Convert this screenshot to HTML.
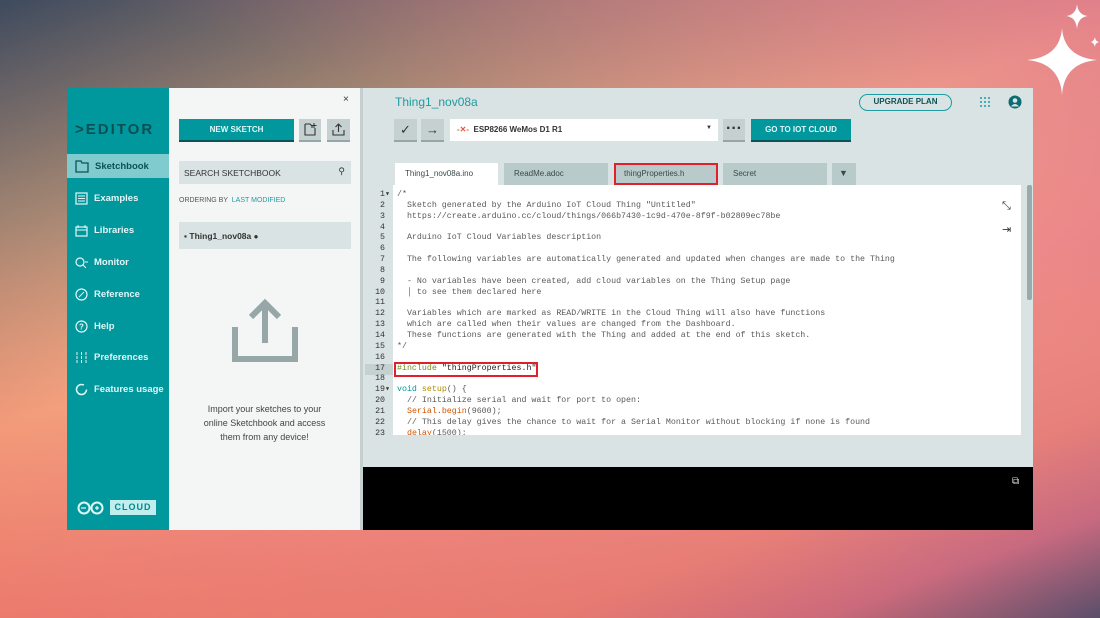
<!DOCTYPE html>
<html><head><meta charset="utf-8"><style>
*{margin:0;padding:0;box-sizing:border-box}
body{width:1100px;height:618px;overflow:hidden;position:relative;font-family:"Liberation Sans",sans-serif;
background:linear-gradient(160deg,#3e4a5e 0%,#9a8070 20%,#f7b088 42%,#f08e88 62%,#e7807a 80%,#c86a80 90%,#5a4e6a 100%);}
.bg2{position:absolute;inset:0;background:linear-gradient(200deg,rgba(220,110,140,.7) 0%,rgba(220,110,140,0) 35%),linear-gradient(20deg,rgba(232,108,90,.6) 0%,rgba(232,108,90,0) 40%)}
.abs{position:absolute}
.side{left:67px;top:88px;width:102px;height:442px;background:#00979d}
.nav{position:absolute;left:0;width:102px;height:24px;color:#e3f6f6;font-size:9.5px;font-weight:bold;display:flex;align-items:center;padding-left:8px}
.nav svg{margin-right:6px}
.panel{left:169px;top:88px;width:191px;height:442px;background:#f4f6f6}
.main{left:363px;top:88px;width:670px;height:379px;background:#dae3e3}
.div{left:360px;top:88px;width:3px;height:442px;background:#c5cfcf}
.code{font-family:"Liberation Mono",monospace;font-size:8.3px;color:#5a5a5a;white-space:pre;line-height:10.85px}
.tab{position:absolute;top:163px;height:22px;background:#b9caca;font-size:8px;color:#3a4a4a;padding:6px 10px}
</style></head><body>
<div class="bg2"></div>
<svg class="abs" style="left:1020px;top:0" width="80" height="100" viewBox="1020 0 80 100">
<path d="M1062 28 Q1064 57 1097 60 Q1064 63 1062 95 Q1060 63 1027 60 Q1060 57 1062 28Z" fill="#fff"/>
<path d="M1077 4 Q1078 15 1088 16 Q1078 17 1077 29 Q1076 17 1066 16 Q1076 15 1077 4Z" fill="#fff"/>
<path d="M1095 37 Q1095 41 1099 42 Q1095 43 1095 47 Q1094 43 1091 42 Q1094 41 1095 37Z" fill="#fff"/></svg>

<div class="abs side">
 <div class="abs" style="left:8px;top:33px;color:#0a4f54;font-size:15px;font-weight:bold;letter-spacing:2px">&gt;EDITOR</div>
 <div class="nav" style="top:66px;background:#7fcbce;color:#0b5358">
  <svg width="14" height="13" viewBox="0 0 14 13"><path d="M1 1h5l1 2h6v9H1z" fill="none" stroke="#0b5358" stroke-width="1.3"/></svg>Sketchbook</div>
 <div style="position:absolute;left:98px;top:74px;width:0;height:0;border:4px solid transparent;border-right-color:#f4f6f6"></div>
 <div class="nav" style="top:98px"><svg width="13" height="13"><rect x="1" y="1" width="11" height="11" fill="none" stroke="#e3f6f6" stroke-width="1.2"/><path d="M3 4h7M3 6.5h7M3 9h7" stroke="#e3f6f6"/></svg>Examples</div>
 <div class="nav" style="top:130px"><svg width="13" height="13"><rect x="1" y="3" width="11" height="9" fill="none" stroke="#e3f6f6" stroke-width="1.2"/><path d="M3 1v3M10 1v3M1 6h11" stroke="#e3f6f6"/></svg>Libraries</div>
 <div class="nav" style="top:162px"><svg width="13" height="13"><circle cx="5" cy="6" r="4" fill="none" stroke="#e3f6f6" stroke-width="1.2"/><path d="M8 9l3 3M10 6h3" stroke="#e3f6f6"/></svg>Monitor</div>
 <div class="nav" style="top:194px"><svg width="13" height="13"><circle cx="6.5" cy="6.5" r="5.5" fill="none" stroke="#e3f6f6" stroke-width="1.2"/><path d="M4 9l5-5" stroke="#e3f6f6"/></svg>Reference</div>
 <div class="nav" style="top:226px"><svg width="13" height="13"><circle cx="6.5" cy="6.5" r="5.5" fill="none" stroke="#e3f6f6" stroke-width="1.2"/><text x="4" y="9.5" font-size="8" fill="#e3f6f6">?</text></svg>Help</div>
 <div class="nav" style="top:257px"><svg width="13" height="13"><path d="M2 1v11M6.5 1v11M11 1v11" stroke="#e3f6f6" stroke-dasharray="3 1"/></svg>Preferences</div>
 <div class="nav" style="top:289px"><svg width="13" height="13"><circle cx="6.5" cy="6.5" r="5" fill="none" stroke="#e3f6f6" stroke-width="1.5" stroke-dasharray="26 6"/></svg>Features usage</div>
 <svg class="abs" style="left:9px;top:413px" width="30" height="14"><circle cx="8" cy="7" r="5.5" fill="none" stroke="#e3f6f6" stroke-width="2"/><circle cx="21" cy="7" r="5.5" fill="none" stroke="#e3f6f6" stroke-width="2"/><path d="M5 7h5M19 7h4M21 5v4" stroke="#e3f6f6" stroke-width="1.3"/></svg>
 <div class="abs" style="left:43px;top:412px;width:46px;height:15px;background:#c0eeee;color:#00878c;font-size:9px;font-weight:bold;letter-spacing:1px;text-align:center;line-height:15px">CLOUD</div>
</div>

<div class="abs panel">
 <div class="abs" style="left:174px;top:6px;font-size:10px;color:#333">×</div>
 <div class="abs" style="left:10px;top:31px;width:115px;height:23px;background:#00979d;border-bottom:2px solid #0b5358;color:#e3f6f6;font-size:8px;font-weight:bold;text-align:center;line-height:21px">NEW SKETCH</div>
 <div class="abs" style="left:130px;top:31px;width:22px;height:23px;background:#c5d0d0;border-bottom:2px solid #98a5a5"><svg width="22" height="21"><path d="M6 5h5l2 2v2M6 5v11h10V9" fill="none" stroke="#333" stroke-width="1.1"/><path d="M15 4v5M12.5 6.5h5" stroke="#333"/></svg></div>
 <div class="abs" style="left:158px;top:31px;width:23px;height:23px;background:#c5d0d0;border-bottom:2px solid #98a5a5"><svg width="23" height="21"><path d="M6 11v5h11v-5M11.5 13V5M8.5 8l3-3 3 3" fill="none" stroke="#333" stroke-width="1.1"/></svg></div>
 <div class="abs" style="left:10px;top:73px;width:172px;height:23px;background:#dae3e3;font-size:8.5px;color:#333;padding:7px 5px">SEARCH SKETCHBOOK<span style="position:absolute;right:6px;top:5px;font-size:9px">⚲</span></div>
 <div class="abs" style="left:10px;top:109px;font-size:7px;color:#555">ORDERING BY &nbsp;<span style="color:#1e9ca1">LAST MODIFIED</span></div>
 <div class="abs" style="left:10px;top:134px;width:172px;height:27px;background:#dae3e3;font-size:8.5px;color:#333;font-weight:bold;padding:9px 5px">▪ Thing1_nov08a <span style="font-size:8px">●</span></div>
 <svg class="abs" style="left:62px;top:209px" width="68" height="68"><path d="M4 30v32h60V30M34 46V6M20 20L34 6l14 14" fill="none" stroke="#97a6a6" stroke-width="6"/></svg>
 <div class="abs" style="left:0;top:314px;width:191px;text-align:center;font-size:9px;color:#444;line-height:14px">Import your sketches to your<br>online Sketchbook and access<br>them from any device!</div>
</div>
<div class="abs div"></div>

<div class="abs main">
 <div class="abs" style="left:32px;top:7px;color:#1e9ca1;font-size:12px">Thing1_nov08a</div>
 <div class="abs" style="left:496px;top:6px;width:93px;height:17px;border:1.5px solid #1e9ca1;border-radius:9px;font-size:8px;font-weight:bold;color:#0b5358;text-align:center;line-height:14px">UPGRADE PLAN</div>
 <svg class="abs" style="left:616px;top:8px" width="12" height="12"><g fill="#1e9ca1"><circle cx="2" cy="2" r="1"/><circle cx="6" cy="2" r="1"/><circle cx="10" cy="2" r="1"/><circle cx="2" cy="6" r="1"/><circle cx="6" cy="6" r="1"/><circle cx="10" cy="6" r="1"/><circle cx="2" cy="10" r="1"/><circle cx="6" cy="10" r="1"/><circle cx="10" cy="10" r="1"/></g></svg>
 <svg class="abs" style="left:645px;top:7px" width="14" height="14"><circle cx="7" cy="7" r="6.5" fill="#0b6d72"/><circle cx="7" cy="5.5" r="2.3" fill="#dae3e3"/><path d="M3 11.5q4-5 8 0" fill="#dae3e3"/></svg>
 <div class="abs" style="left:31px;top:31px;width:23px;height:23px;background:#c5d0d0;border-bottom:2px solid #98a5a5;text-align:center;font-size:13px;color:#333;line-height:21px">✓</div>
 <div class="abs" style="left:58px;top:31px;width:23px;height:23px;background:#c5d0d0;border-bottom:2px solid #98a5a5;text-align:center;font-size:13px;color:#333;line-height:21px">→</div>
 <div class="abs" style="left:87px;top:31px;width:268px;height:22px;background:#fff;font-size:8px;font-weight:bold;color:#333;padding:6px 7px"><span style="color:#e05a3a">-✕-</span>&nbsp; ESP8266 WeMos D1 R1<span style="position:absolute;right:6px;font-size:6px">▼</span></div>
 <div class="abs" style="left:360px;top:31px;width:22px;height:23px;background:#c5d0d0;border-bottom:2px solid #98a5a5;text-align:center;font-weight:bold;color:#333;line-height:19px">···</div>
 <div class="abs" style="left:388px;top:31px;width:100px;height:23px;background:#00979d;border-bottom:2px solid #0b5358;color:#e3f6f6;font-size:8px;font-weight:bold;text-align:center;line-height:21px">GO TO IOT CLOUD</div>
</div>
<div class="tab" style="left:395px;width:103px;background:#fff">Thing1_nov08a.ino</div>
<div class="tab" style="left:504px;width:104px">ReadMe.adoc</div>
<div class="tab" style="left:614px;width:104px;outline:2px solid #e0202a;outline-offset:-2px">thingProperties.h</div>
<div class="tab" style="left:723px;width:104px">Secret</div>
<div class="tab" style="left:832px;width:24px;font-size:9px;padding:5px 7px">▼</div>
<div class="abs" style="left:393px;top:185px;width:628px;height:250px;background:#fff"></div>
<div class="abs" style="left:1027px;top:185px;width:5px;height:115px;background:#9aa;border-radius:2px"></div>
<div class="abs" style="left:365px;top:364px;width:28px;height:11px;background:#c5d0d0"></div>
<div class="abs" style="left:1002px;top:200px;font-size:11px;color:#333">⤡</div>
<div class="abs" style="left:1002px;top:223px;font-size:11px;color:#333">⇥</div>
<div class="abs code" style="left:366px;top:190px;height:245px;overflow:hidden;text-align:right;width:24px;color:#333">1▾
2 
3 
4 
5 
6 
7 
8 
9 
10 
11 
12 
13 
14 
15 
16 
17 
18 
19▾
20 
21 
22 
23 </div>
<div class="abs code" style="left:397px;top:190px;height:245px;overflow:hidden">/*
  Sketch generated by the Arduino IoT Cloud Thing "Untitled"
  https://create.arduino.cc/cloud/things/066b7430-1c9d-470e-8f9f-b02809ec78be

  Arduino IoT Cloud Variables description

  The following variables are automatically generated and updated when changes are made to the Thing

  - No variables have been created, add cloud variables on the Thing Setup page
  │ to see them declared here

  Variables which are marked as READ/WRITE in the Cloud Thing will also have functions
  which are called when their values are changed from the Dashboard.
  These functions are generated with the Thing and added at the end of this sketch.
*/

<span style="color:#6f8f20">#include</span> <span style="color:#222">"thingProperties.h"</span>

<span style="color:#00979d">void</span> <span style="color:#b08800">setup</span>() {
  // Initialize serial and wait for port to open:
  <span style="color:#d35400">Serial</span>.<span style="color:#d35400">begin</span>(9600);
  // This delay gives the chance to wait for a Serial Monitor without blocking if none is found
  <span style="color:#d35400">delay</span>(1500);</div>
<div class="abs" style="left:394px;top:362px;width:144px;height:15px;border:2px solid #e0202a"></div>
<div class="abs" style="left:363px;top:467px;width:670px;height:63px;background:#000"></div>
<div class="abs" style="left:1012px;top:476px;font-size:10px;color:#ddd">⧉</div>
</body></html>
